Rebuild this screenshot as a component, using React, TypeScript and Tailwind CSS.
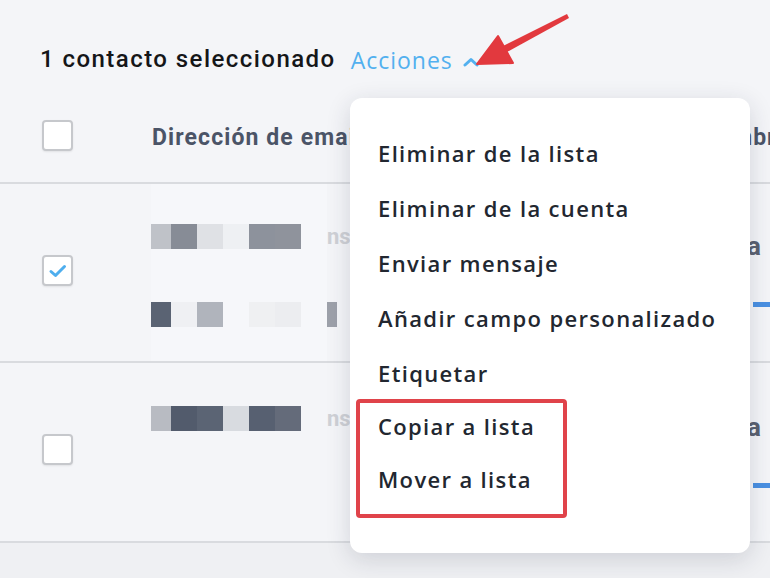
import React from "react";

const sans = { fontFamily: "Roboto, 'Liberation Sans', sans-serif" };
const menuFont = { fontFamily: "'Open Sans', 'Noto Sans', sans-serif" };

type Cell = { w: number; c: string };

const mosaicA: Cell[] = [
  { w: 20, c: "bg-[#bfc2c8]" },
  { w: 26, c: "bg-[#878c96]" },
  { w: 26, c: "bg-[#dfe1e5]" },
  { w: 26, c: "bg-[#eef0f3]" },
  { w: 26, c: "bg-[#8d929c]" },
  { w: 26, c: "bg-[#8f939c]" },
];
const mosaicB: Cell[] = [
  { w: 20, c: "bg-[#5a6373]" },
  { w: 26, c: "bg-[#eff0f3]" },
  { w: 26, c: "bg-[#b0b4bc]" },
  { w: 26, c: "bg-transparent" },
  { w: 26, c: "bg-[#eff0f2]" },
  { w: 26, c: "bg-[#ecedf0]" },
];
const mosaicC: Cell[] = [
  { w: 20, c: "bg-[#b8bbc2]" },
  { w: 26, c: "bg-[#525b6c]" },
  { w: 26, c: "bg-[#5b6474]" },
  { w: 26, c: "bg-[#d8dbe0]" },
  { w: 26, c: "bg-[#576071]" },
  { w: 26, c: "bg-[#646b7a]" },
];

function Mosaic({ cells }: { cells: Cell[] }) {
  return (
    <div className="flex h-[25px]">
      {cells.map((cell, i) => (
        <div key={i} className={`h-full ${cell.c}`} style={{ width: cell.w }} />
      ))}
    </div>
  );
}

function Checkbox({ checked }: { checked?: boolean }) {
  return (
    <div className="w-[31px] h-[31px] rounded-[4px] border-2 border-[#c6c8cc] bg-white shadow-[0_1px_2px_rgba(0,0,0,0.08)] flex items-center justify-center shrink-0">
      {checked && (
        <svg width="20" height="16" viewBox="0 0 20 16" fill="none">
          <path d="M3 8.5 L7.5 12.5 L16.5 3.5" stroke="#4eaeee" strokeWidth="3" strokeLinecap="round" strokeLinejoin="round" />
        </svg>
      )}
    </div>
  );
}

const items = [
  "Eliminar de la lista",
  "Eliminar de la cuenta",
  "Enviar mensaje",
  "Añadir campo personalizado",
  "Etiquetar",
];

const itemCls = "pl-[28px] flex items-center text-[22px] font-semibold text-[#222730] tracking-[1.35px]";

export default function App() {
  return (
    <div className="relative w-[770px] h-[578px] overflow-hidden bg-[#f4f5f8]" style={sans}>
      {/* top bar */}
      <div className="h-[100px] pl-[40px] pt-[43px] flex items-start">
        <span className="text-[24px] font-medium text-[#151618] tracking-[1.45px] leading-[32px] whitespace-nowrap">
          1 contacto seleccionado
        </span>
        <span className="ml-[15px] flex items-center text-[#52b0ef] text-[23px] font-medium leading-[34px] tracking-[1px] whitespace-nowrap" style={menuFont}>
          Acciones
          <svg className="ml-[10px] mt-[4px]" width="16" height="10" viewBox="0 0 16 10" fill="none">
            <path d="M2 8 L8 2.5 L14 8" stroke="#52b0ef" strokeWidth="3" strokeLinecap="round" strokeLinejoin="round" />
          </svg>
        </span>
      </div>

      {/* header row */}
      <div className="h-[84px] flex items-center pl-[42px] border-b-2 border-[#d9dbdf] pb-[12px]">
        <Checkbox />
        <span className="ml-[79px] mt-[6px] w-[549px] shrink-0 text-[23px] font-bold text-[#4b5467] tracking-[1.1px] whitespace-nowrap">
          Dirección de email
        </span>
        <span className="mt-[6px] shrink-0 text-[23px] font-bold text-[#4b5467] tracking-[1px] whitespace-nowrap">Nombre</span>
      </div>

      {/* row 1 */}
      <div className="h-[179px] flex border-b-2 border-[#d9dbdf]">
        <div className="w-[151px] shrink-0 pl-[42px] flex items-center pb-[4px]">
          <Checkbox checked />
        </div>
        <div className="w-[176px] shrink-0 bg-[#f6f7fa] flex flex-col pt-[40px] gap-[53px]">
          <Mosaic cells={mosaicA} />
          <Mosaic cells={mosaicB} />
        </div>
        <div className="w-[400px] shrink-0 flex flex-col pt-[40px] gap-[53px]">
          <span className="text-[22px] font-bold text-[#cfd1d6] leading-[25px]">nsmith</span>
          <div className="w-[10px] h-[25px] bg-[#9da1aa]" />
        </div>
        <div className="w-[43px] shrink-0 flex flex-col pt-[50px]">
          <span className="text-[26px] font-bold text-[#5a6170] leading-[25px] pl-[20px]">a</span>
          <div className="mt-[43px] ml-[26px] w-[17px] h-[5px] bg-[#4a90e2]" />
        </div>
      </div>

      {/* row 2 */}
      <div className="h-[180px] flex border-b-2 border-[#d9dbdf]">
        <div className="w-[151px] shrink-0 pl-[42px] flex items-center pb-[6px]">
          <Checkbox />
        </div>
        <div className="w-[176px] shrink-0 flex flex-col pt-[43px]">
          <Mosaic cells={mosaicC} />
        </div>
        <div className="w-[400px] shrink-0 flex flex-col pt-[43px]">
          <span className="text-[22px] font-bold text-[#cfd1d6] leading-[25px]">nsmith</span>
        </div>
        <div className="w-[43px] shrink-0 flex flex-col pt-[52px]">
          <span className="text-[26px] font-bold text-[#5a6170] leading-[25px] pl-[20px]">a</span>
          <div className="mt-[43px] ml-[26px] w-[17px] h-[5px] bg-[#4a90e2]" />
        </div>
      </div>

      <div className="h-[40px] bg-[#eff0f3]" />

      {/* dropdown menu */}
      <div
        className="absolute left-[350px] top-[98px] w-[400px] h-[455px] bg-white rounded-[12px] shadow-[0_6px_24px_rgba(30,40,60,0.16)] pt-[28px]"
        style={menuFont}
      >
        {items.map((t) => (
          <div key={t} className={`h-[55px] ${itemCls}`}>
            {t}
          </div>
        ))}
        <div className="relative">
          <div className={`h-[51px] ${itemCls}`}>Copiar a lista</div>
          <div className={`h-[55px] ${itemCls}`}>Mover a lista</div>
          <div className="absolute left-[6px] top-[-2px] w-[211px] h-[119px] border-4 border-[#e0434a] rounded-[4px]" />
        </div>
      </div>

      {/* annotation arrow */}
      <svg className="absolute left-0 top-0 pointer-events-none" width="770" height="578" viewBox="0 0 770 578">
        <path d="M567 14 L569 18 L507 52 L503 46 Z" fill="#e2393e" />
        <path d="M477 64 L498 36 L513 63 Z" fill="#e2393e" stroke="#e2393e" strokeWidth="2" strokeLinejoin="round" />
      </svg>
    </div>
  );
}
